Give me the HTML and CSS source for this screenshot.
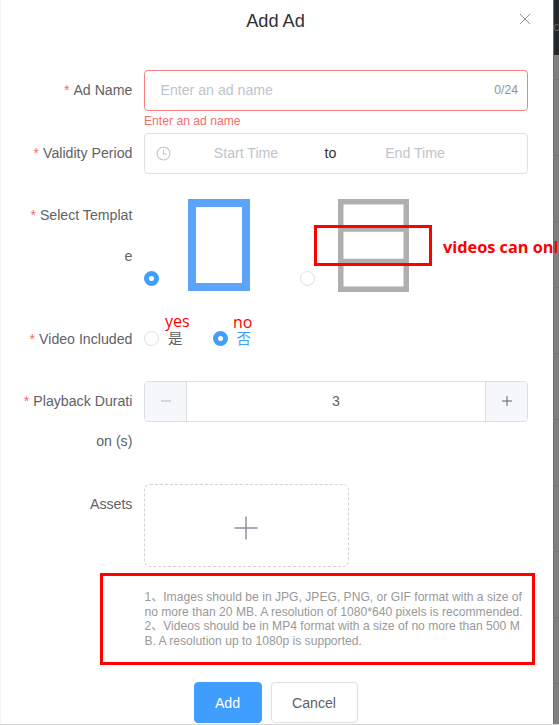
FILE: index.html
```html
<!DOCTYPE html>
<html lang="en">
<head>
<meta charset="utf-8">
<title>Add Ad</title>
<link rel="stylesheet" href="styles.css">
</head>
<body>
<div class="screen">
  <main class="dialog">
    <header class="dialog-header">
      <h1 class="title">Add Ad</h1>
      <svg class="close" viewBox="0 0 12 12"><path d="M1 1l10 10M11 1L1 11"/></svg>
    </header>
    <form class="form">
      <div class="row row-name">
        <label class="label required">Ad Name</label>
        <div class="control">
          <div class="input input-error"><span class="placeholder">Enter an ad name</span><span class="count">0/24</span></div>
          <div class="error">Enter an ad name</div>
        </div>
      </div>
      <div class="row row-period">
        <label class="label required">Validity Period</label>
        <div class="input range">
          <svg class="clock" viewBox="0 0 14 14"><circle cx="7" cy="7" r="6"/><path d="M7 3.5V7.5H10"/></svg>
          <span class="date">Start Time</span><span class="to">to</span><span class="date">End Time</span>
        </div>
      </div>
      <div class="row row-template">
        <label class="label required">Select Templat<br>e</label>
        <div class="control templates">
          <span class="radio checked"></span>
          <svg class="tpl-single" viewBox="0 0 62 92"><rect x="4" y="4" width="54" height="84"/></svg>
          <span class="radio radio-second"></span>
          <svg class="tpl-triple" viewBox="0 0 71 93"><path d="M2.75 2.75H68.25V90.25H2.75zM2.75 30H68.25M2.75 62.5H68.25"/></svg>
        </div>
      </div>
      <div class="row row-video">
        <label class="label required">Video Included</label>
        <div class="control options">
          <span class="option"><span class="radio"></span><span class="option-text">是</span></span>
          <span class="option active"><span class="radio checked"></span><span class="option-text">否</span></span>
        </div>
      </div>
      <div class="row row-duration">
        <label class="label required">Playback Durati<br>on (s)</label>
        <div class="stepper">
          <span class="step minus"><svg viewBox="0 0 12 12"><path d="M1 6H11"/></svg></span>
          <span class="value">3</span>
          <span class="step plus"><svg viewBox="0 0 12 12"><path d="M1 6H11M6 1V11"/></svg></span>
        </div>
      </div>
      <div class="row row-assets">
        <label class="label">Assets</label>
        <div class="control">
          <div class="upload"><svg viewBox="0 0 24 24"><path d="M.5 12H23.5M12 .5V23.5"/></svg></div>
          <div class="hint">
            <div>1、Images should be in JPG, JPEG, PNG, or GIF format with a size of</div>
            <div>no more than 20 MB. A resolution of 1080*640 pixels is recommended.</div>
            <div>2、Videos should be in MP4 format with a size of no more than 500 M</div>
            <div>B. A resolution up to 1080p is supported.</div>
          </div>
        </div>
      </div>
    </form>
    <footer class="footer">
      <button class="btn primary">Add</button>
      <button class="btn">Cancel</button>
    </footer>
  </main>
  <aside class="backdrop"><div class="topbar">c</div><div class="lines"></div></aside>
  <span class="note yes">yes</span>
  <span class="note no">no</span>
  <span class="note videos">videos can onl</span>
  <div class="mark mark-template"></div>
  <div class="mark mark-hint"></div>
</div>
</body>
</html>
```
FILE: styles.css
```css
* { box-sizing: border-box; }
body { margin: 0; background: #fff; font: 14.15px/40.4px "Liberation Sans", "Noto Sans CJK SC", sans-serif; color: #606266; }
svg { display: block; fill: none; }
.screen { position: relative; display: flex; width: 559px; height: 725px; overflow: hidden; border-bottom: 1px solid #d4d4d4; }
.dialog { width: 553px; flex: none; border-left: 1px solid #f4f4f5; }
.dialog-header { position: relative; height: 70px; }
.title { margin: 0; padding-top: 9px; text-align: center; font-size: 18.2px; line-height: 25px; font-weight: 400; color: #303133; padding-right: 3px; }
.close { position: absolute; top: 13px; left: 518px; width: 12px; height: 12px; stroke: #909399; stroke-width: 1; }
.row { display: grid; grid-template-columns: 131px 384px; column-gap: 12px; align-items: start; }
.row-name, .row-period { height: 63px; }
.row-template { height: 123px; }
.row-video { height: 62px; }
.row-duration { height: 103px; }
.row-assets { height: 198px; }
.label { text-align: right; margin-right: -0.4px; }
.row-template .label { margin-top: -0.6px; line-height: 40.6px; }
.required::before { content: "*"; color: #f56c6c; margin-right: 4px; }
.input { display: flex; align-items: center; height: 41px; border: 1px solid #dcdfe6; border-radius: 4px; }
.input-error { border-color: #f88080; padding: 0 9px 0 15.5px; justify-content: space-between; }
.placeholder, .date { color: #c0c4cc; }
.count { font-size: 12.15px; color: #909399; }
.error { color: #f56c6c; font-size: 12.15px; line-height: 12px; padding-top: 4px; }
.range { padding: 0 10px 0 11px; }
.clock { width: 15px; height: 15px; stroke: #c0c4cc; flex: none; }
.date { width: 150px; text-align: center; }
.to { width: 19px; text-align: center; color: #303133; }
.templates { display: flex; align-items: flex-start; padding-top: 3px; }
.radio { display: block; width: 15px; height: 15px; flex: none; border: 1px solid #dcdfe6; border-radius: 50%; background: #fff; }
.radio.checked { border: 5px solid #409eff; }
.templates .radio { margin-top: 72px; }
.tpl-single { width: 62px; height: 92px; margin-left: 29px; stroke: #5ba4f9; stroke-width: 8; }
.templates .radio-second { margin-left: 50px; }
.tpl-triple { width: 71px; height: 93px; margin-left: 23px; stroke: #afafaf; stroke-width: 5.5; }
.options { display: flex; gap: 30px; }
.option { display: flex; align-items: center; gap: 9px; font-size: 14.5px; line-height: 15px; height: 39px; }
.option-text { padding-top: 2px; }
.option.active { color: #409eff; }
.stepper { display: flex; height: 41px; border: 1px solid #dcdfe6; border-radius: 4px; overflow: hidden; }
.step { width: 42px; background: #f5f7fa; display: grid; place-items: center; padding-bottom: 2px; }
.step svg { width: 12px; height: 12px; stroke: #606266; }
.minus { border-right: 1px solid #dcdfe6; }
.minus svg { stroke: #b4b7bd; }
.plus { border-left: 1px solid #dcdfe6; }
.value { flex: 1; text-align: center; line-height: 39px; }
.upload { width: 205px; height: 83px; border: 1px dashed #d2d2d2; border-radius: 6px; display: grid; place-items: center; padding: 4px 1px 0 0; }
.upload svg { width: 24px; height: 24px; stroke: #8c939d; stroke-width: 1.5; }
.hint { margin-top: 23px; padding-left: .4px; font-size: 12.11px; line-height: 14.5px; color: #999; white-space: nowrap; }
.footer { display: flex; gap: 9px; padding-left: 192.5px; }
.btn { height: 41px; width: 87px; padding: 0; border: 1px solid #dcdfe6; border-radius: 4px; background: #fff; color: #606266; font: inherit; line-height: 38px; }
.btn.primary { width: 68px; background: #409eff; border-color: #409eff; color: #fff; }
.backdrop { width: 6px; flex: none; background: #808080; border-left: 1px solid #707070; overflow: hidden; }
.topbar { height: 55px; background: #24272b; color: #5c5c5c; font-size: 13px; line-height: 53px; text-indent: -1px; }
.lines { height: 670px; background: repeating-linear-gradient(#808080 0 65px, #757575 65px 66px); background-position: 0 35px; }
.note { position: absolute; color: #f00; font: 16px/16px "Open Sans", sans-serif; white-space: nowrap; }
.yes { left: 165px; top: 313px; }
.no { left: 233px; top: 314px; }
.videos { left: 443px; top: 239px; font-weight: 700; font-size: 16.3px; }
.mark { position: absolute; border: 3px solid #f00; }
.mark-template { left: 314px; top: 225px; width: 118px; height: 41px; }
.mark-hint { left: 100px; top: 573px; width: 435px; height: 92px; }
```
